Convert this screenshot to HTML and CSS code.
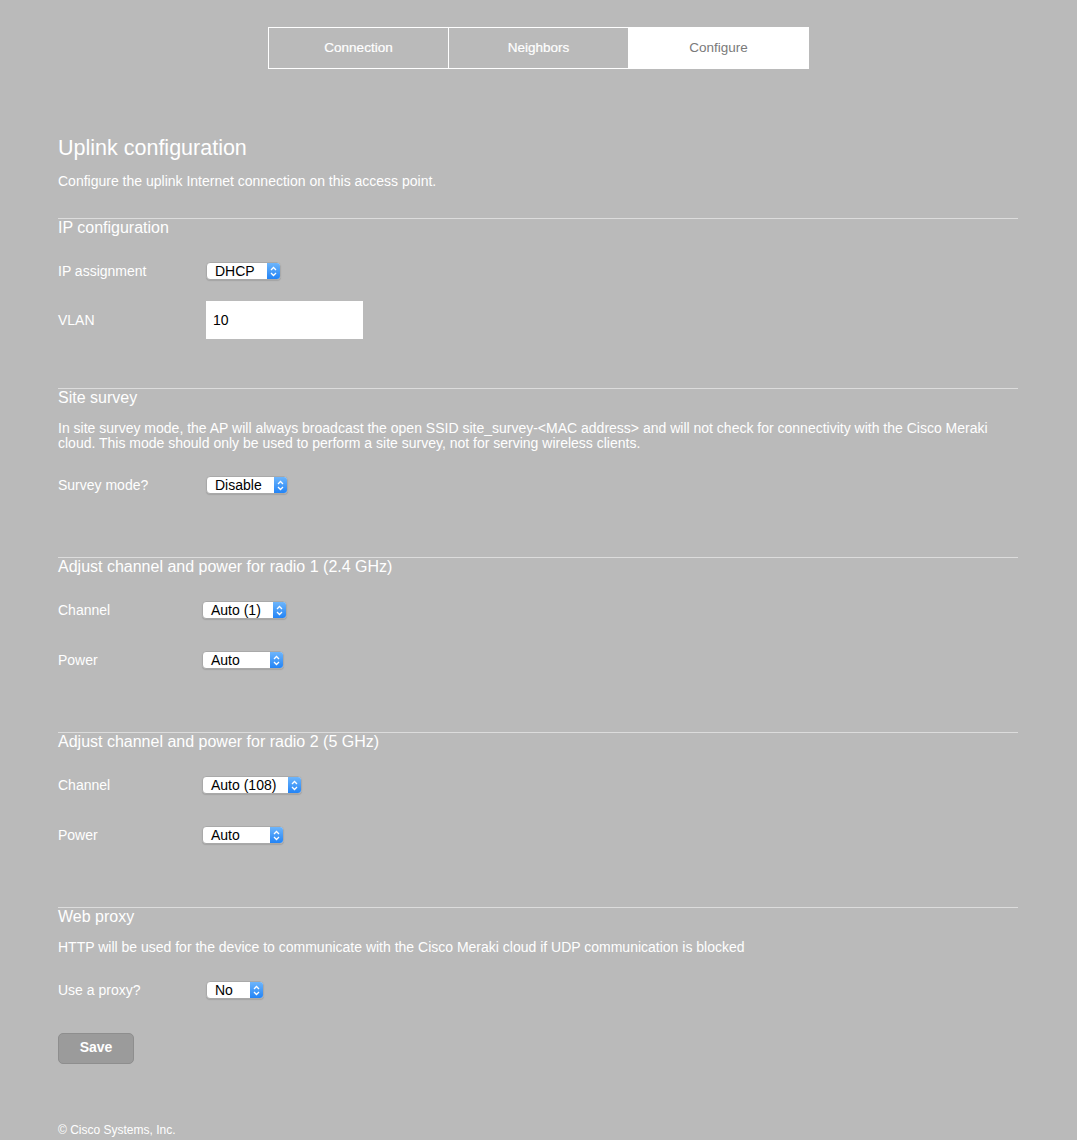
FILE: index.html
```html
<!DOCTYPE html>
<html>
<head>
<meta charset="utf-8">
<title>Uplink configuration</title>
<link rel="stylesheet" href="styles.css">
</head>
<body>
<nav class="tabs">
  <div class="tab">Connection</div>
  <div class="tab">Neighbors</div>
  <div class="tab active">Configure</div>
</nav>
<main class="content">
  <h1 class="title">Uplink configuration</h1>
  <p class="subtitle">Configure the uplink Internet connection on this access point.</p>

  <section class="section s-ip">
    <h2>IP configuration</h2>
    <div class="row first">
      <span class="label">IP assignment</span>
      <div class="select w-dhcp"><span class="val">DHCP</span><span class="arrow"><svg width="13" height="17" viewBox="0 0 13 17"><path d="M4 7 L6.5 4.5 L9 7 M4 10 L6.5 12.5 L9 10" fill="none" stroke="#fff" stroke-width="1.3"/></svg></span></div>
    </div>
    <div class="row gap21">
      <span class="label">VLAN</span>
      <div class="input">10</div>
    </div>
  </section>

  <section class="section">
    <h2>Site survey</h2>
    <p class="desc">In site survey mode, the AP will always broadcast the open SSID site_survey-&lt;MAC address&gt; and will not check for connectivity with the Cisco Meraki cloud. This mode should only be used to perform a site survey, not for serving wireless clients.</p>
    <div class="row after-desc">
      <span class="label">Survey mode?</span>
      <div class="select w-disable"><span class="val">Disable</span><span class="arrow"><svg width="13" height="17" viewBox="0 0 13 17"><path d="M4 7 L6.5 4.5 L9 7 M4 10 L6.5 12.5 L9 10" fill="none" stroke="#fff" stroke-width="1.3"/></svg></span></div>
    </div>
  </section>

  <section class="section">
    <h2>Adjust channel and power for radio 1 (2.4 GHz)</h2>
    <div class="row narrow first">
      <span class="label">Channel</span>
      <div class="select w-auto1"><span class="val">Auto (1)</span><span class="arrow"><svg width="13" height="17" viewBox="0 0 13 17"><path d="M4 7 L6.5 4.5 L9 7 M4 10 L6.5 12.5 L9 10" fill="none" stroke="#fff" stroke-width="1.3"/></svg></span></div>
    </div>
    <div class="row narrow gap32">
      <span class="label">Power</span>
      <div class="select w-auto"><span class="val">Auto</span><span class="arrow"><svg width="13" height="17" viewBox="0 0 13 17"><path d="M4 7 L6.5 4.5 L9 7 M4 10 L6.5 12.5 L9 10" fill="none" stroke="#fff" stroke-width="1.3"/></svg></span></div>
    </div>
  </section>

  <section class="section">
    <h2>Adjust channel and power for radio 2 (5 GHz)</h2>
    <div class="row narrow first">
      <span class="label">Channel</span>
      <div class="select w-auto108"><span class="val">Auto (108)</span><span class="arrow"><svg width="13" height="17" viewBox="0 0 13 17"><path d="M4 7 L6.5 4.5 L9 7 M4 10 L6.5 12.5 L9 10" fill="none" stroke="#fff" stroke-width="1.3"/></svg></span></div>
    </div>
    <div class="row narrow gap32">
      <span class="label">Power</span>
      <div class="select w-auto"><span class="val">Auto</span><span class="arrow"><svg width="13" height="17" viewBox="0 0 13 17"><path d="M4 7 L6.5 4.5 L9 7 M4 10 L6.5 12.5 L9 10" fill="none" stroke="#fff" stroke-width="1.3"/></svg></span></div>
    </div>
  </section>

  <section class="section last">
    <h2>Web proxy</h2>
    <p class="desc">HTTP will be used for the device to communicate with the Cisco Meraki cloud if UDP communication is blocked</p>
    <div class="row after-desc2">
      <span class="label">Use a proxy?</span>
      <div class="select w-no"><span class="val">No</span><span class="arrow"><svg width="13" height="17" viewBox="0 0 13 17"><path d="M4 7 L6.5 4.5 L9 7 M4 10 L6.5 12.5 L9 10" fill="none" stroke="#fff" stroke-width="1.3"/></svg></span></div>
    </div>
    <button class="save" type="button">Save</button>
  </section>

  <footer class="footer">© Cisco Systems, Inc.</footer>
</main>
</body>
</html>
```

FILE: styles.css
```css
html, body {
  margin: 0;
  padding: 0;
  background: #bababa;
}
body {
  font-family: "Liberation Sans", Arial, Helvetica, sans-serif;
  color: #ffffff;
  min-height: 1140px;
}

.tabs {
  display: flex;
  width: 541px;
  margin: 27px 0 0 268px;
  border: 1px solid #ffffff;
  box-sizing: border-box;
  height: 42px;
}
.tab {
  flex: 1;
  display: flex;
  align-items: center;
  justify-content: center;
  font-size: 13.5px;
  color: #ffffff;
  border-left: 1px solid #ffffff;
  padding-bottom: 2px;
  -webkit-text-stroke: 0.2px #ffffff;
}
.tab:first-child {
  border-left: none;
}
.tab.active {
  background: #ffffff;
  color: #7a7a7a;
  -webkit-text-stroke: 0;
}

.content {
  margin-left: 58px;
  width: 960px;
}

.title {
  margin: 66px 0 0;
  font-size: 21.5px;
  line-height: 26px;
  font-weight: normal;
}
.subtitle {
  margin: 12px 0 0;
  font-size: 14px;
  line-height: 16px;
}

.section {
  border-top: 1px solid #dcdcdc;
  padding-bottom: 63px;
}
.section.s-ip {
  margin-top: 29px;
  padding-bottom: 49px;
}
.section.last {
  padding-bottom: 0;
}
.section h2 {
  margin: 0;
  font-size: 16px;
  line-height: 18px;
  font-weight: normal;
}

.desc {
  margin: 14px 0 0;
  font-size: 14px;
  line-height: 15px;
}

.row {
  display: grid;
  grid-template-columns: 148px auto;
  align-items: center;
  justify-items: start;
}
.row.narrow {
  grid-template-columns: 144px auto;
}
.row.first { margin-top: 25px; }
.row.gap21 { margin-top: 21px; }
.row.gap32 { margin-top: 32px; }
.row.after-desc { margin-top: 25px; }
.row.after-desc2 { margin-top: 26px; }

.label {
  font-size: 14px;
  line-height: 16px;
}

.select {
  display: flex;
  height: 18px;
  box-sizing: border-box;
  background: #ffffff;
  border: 1px solid #a9a9a9;
  border-radius: 4px;
  box-shadow: 0 1px 1px rgba(0, 0, 0, 0.12);
  overflow: hidden;
  color: #000000;
  font-size: 14px;
}
.select .val {
  flex: 1;
  padding-left: 8px;
  line-height: 16px;
  white-space: nowrap;
}
.select .arrow {
  width: 13px;
  flex: none;
  background: linear-gradient(#6db5fb, #2384f6);
  display: flex;
  align-items: center;
  justify-content: center;
}
.select .arrow svg {
  display: block;
}
.w-dhcp { width: 75px; }
.w-disable { width: 82px; }
.w-auto1 { width: 85px; }
.w-auto { width: 82px; }
.w-auto108 { width: 100px; }
.w-no { width: 58px; }

.input {
  width: 157px;
  height: 38px;
  box-sizing: border-box;
  background: #ffffff;
  color: #000000;
  font-size: 14px;
  line-height: 38px;
  padding-left: 7px;
}

.save {
  display: block;
  margin-top: 34px;
  width: 76px;
  height: 31px;
  background: #9b9b9b;
  border: 1px solid #8e8e8e;
  border-radius: 5px;
  color: #ffffff;
  font-family: "Liberation Sans", Arial, Helvetica, sans-serif;
  font-size: 14px;
  font-weight: bold;
  padding: 0 0 4px;
}

.footer {
  margin-top: 59px;
  font-size: 12px;
  line-height: 14px;
  padding-bottom: 3px;
}
```
